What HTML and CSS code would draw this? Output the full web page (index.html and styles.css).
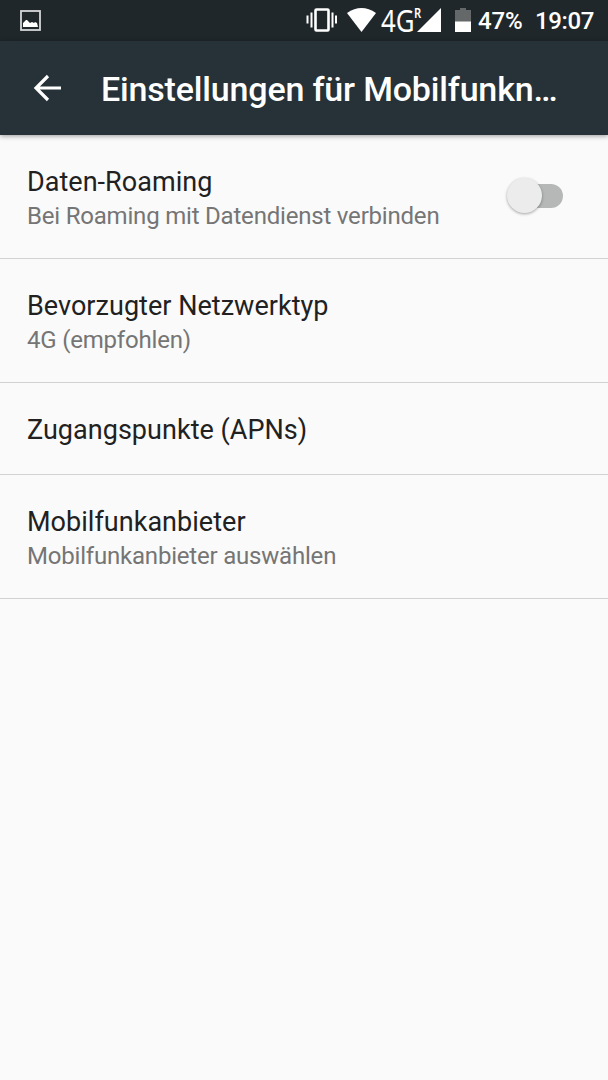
FILE: index.html
```html
<!DOCTYPE html>
<html lang="de">
<head>
<meta charset="utf-8">
<title>Einstellungen für Mobilfunknetze</title>
<link rel="stylesheet" href="styles.css">
</head>
<body>
<header class="status">
  <svg class="picture" width="21" height="21" viewBox="0 0 21 21"><rect x="1" y="1" width="19" height="19" fill="none" stroke="#d4d6d7" stroke-width="1.8"/><path d="M3 17v-4l3-3h1l3 3 2-1 2 1 1-1 2 1 1 4z" fill="#fff"/></svg>
  <svg class="vibrate" width="32" height="24" viewBox="0 0 32 24"><path d="M1.500 7.500v8M5.500 4.500v15M26.500 4.500v15M30 7.500v8" stroke="#fff" stroke-width="2"/><rect x="9.500" y="1.500" width="13" height="21" rx="1" fill="none" stroke="#fff" stroke-width="2.600"/></svg>
  <svg class="wifi" width="29" height="24" viewBox="0 0 29 24"><path d="M0 5Q14.500-5 29 5L14.500 24z" fill="#fff"/></svg>
  <span class="net"><span class="net-text">4G</span></span><span class="roam"><span class="roam-text">R</span></span>
  <svg class="signal" width="24" height="24" viewBox="0 0 24 24"><path d="M0 24L24 0V24z" fill="#fff"/></svg>
  <svg class="battery" width="16" height="24" viewBox="0 0 16 24"><path d="M5 0h6v2h5v12H0V2h5z" fill="#656869"/><path d="M0 13.500h16V24H0z" fill="#fff"/></svg>
  <span class="percent">47%</span><span class="clock">19:07</span>
</header>
<div class="toolbar">
  <svg class="back" width="28" height="28" viewBox="0 0 28 28"><path d="M28 14H4M15 2L3 14l12 12" fill="none" stroke="#fff" stroke-width="3.200"/></svg>
  <h1 class="title">Einstellungen für Mobilfunkn…</h1>
</div>
<main class="list">
  <section class="item"><div><div class="name">Daten-Roaming</div><div class="summary">Bei Roaming mit Datendienst verbinden</div></div><div class="switch"><div class="thumb"></div></div></section>
  <section class="item"><div><div class="name">Bevorzugter Netzwerktyp</div><div class="summary">4G (empfohlen)</div></div></section>
  <section class="item single"><div class="name">Zugangspunkte (APNs)</div></section>
  <section class="item"><div><div class="name">Mobilfunkanbieter</div><div class="summary">Mobilfunkanbieter auswählen</div></div></section>
</main>
</body>
</html>
```
FILE: styles.css
```css
* { box-sizing: border-box; }
body { margin: 0; height: 1080px; background: #fafafa; font-family: Roboto, sans-serif; overflow: hidden; }
svg { display: block; flex: none; }
.status { display: flex; align-items: center; height: 41px; padding: 0 14px 0 20px; background: #20272b; color: #fff; white-space: nowrap; }
.status svg { margin-bottom: 1px; }
.vibrate { margin-left: auto; }
.wifi { margin-left: 9px; }
.net { width: 33px; margin-left: 5px; font: 30px/40px "Noto Sans", sans-serif; }
.net-text { display: inline-block; transform: scaleX(.86); transform-origin: left; }
.roam { width: 8px; align-self: flex-start; margin-top: 4px; font: 600 14px/18px "Noto Sans", sans-serif; }
.roam-text { display: inline-block; transform: scaleX(.8); transform-origin: left; }
.signal { margin-left: -5px; }
.battery { margin-left: 14px; }
.percent { width: 44px; margin-left: 7px; font-size: 24px; font-weight: 500; line-height: 40px; letter-spacing: -.2px; }
.clock { width: 59px; margin-left: 13px; font-size: 24px; font-weight: 500; letter-spacing: -.4px; }
.toolbar { display: flex; align-items: center; height: 94px; padding: 0 33px; background: #263238; color: #fff; box-shadow: 0 1px 5px rgba(0,0,0,.4); }
.title { margin: 2px 0 0 40px; font-size: 34px; font-weight: 500; line-height: 40px; letter-spacing: -.17px; white-space: nowrap; }
.item { display: flex; align-items: center; justify-content: space-between; height: 124px; padding: 2px 45px 0 27px; border-bottom: 1px solid #d2d2d2; }
.single { height: 92px; }
.name { font-size: 27px; line-height: 36px; letter-spacing: .03px; color: #212121; }
.summary { font-size: 24px; line-height: 32px; letter-spacing: -.2px; color: #757575; }
.switch { width: 50px; height: 24px; margin-bottom: 4px; border-radius: 12px; background: #b6b8b8; }
.thumb { width: 35px; height: 35px; margin: -6px 0 0 -6px; border-radius: 50%; background: #ececec; box-shadow: 0 1px 3px rgba(0,0,0,.35); }
```
